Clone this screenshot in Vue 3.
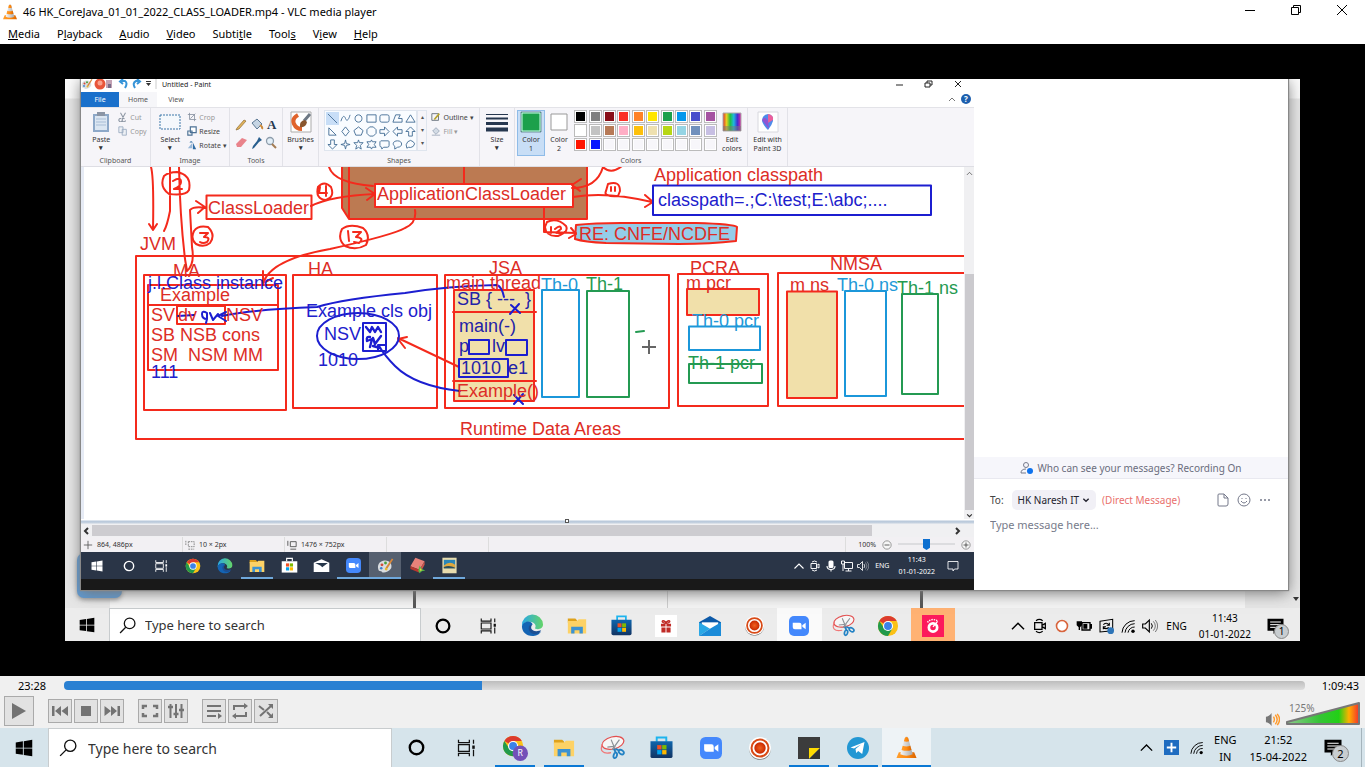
<script setup>
import { ref } from 'vue'

const menus = [
  ['', 'M', 'edia'], ['P', 'l', 'ayback'], ['', 'A', 'udio'], ['', 'V', 'ideo'],
  ['Subti', 't', 'le'], ['Tool', 's', ''], ['V', 'i', 'ew'], ['', 'H', 'elp']
]
const position = ref(337)
const volume = ref(125)
const zoomLevel = ref(50)
const message = ref('')
const query = ref('')
const innerQuery = ref('')

const palette = [
  '#000000', '#7f7f7f', '#880e17', '#fb3025', '#ff8227', '#ffe600', '#1ca04b', '#0397ec', '#464ccb', '#a553a1',
  '#ffffff', '#c3c3c3', '#b77a57', '#ffaec5', '#fdc00c', '#eee0b0', '#b7d716', '#95d4e4', '#7191bd', '#c7bfe3',
  '#ff1500', '#0614ff', '', '', '', '', '', '', '', ''
]
const shapes = [
  'M1 1L11 11', 'M1 9C3 2 5 3 6 6S9 9 11 2', 'M6 2C11 2 11 10 6 10S1 2 6 2Z', 'M1 2H11V10H1Z', 'M3 2H9Q11 2 11 4V8Q11 10 9 10H3Q1 10 1 8V4Q1 2 3 2Z', 'M1 10L4 2H9L7 6H11V10Z', 'M6 2L11 10H1Z',
  'M2 2L10 10H2Z', 'M6 1L10 6L6 11L2 6Z', 'M6 1L11 5L9 10H3L1 5Z', 'M4 1H8L11 4V8L8 11H4L1 8V4Z', 'M1 4H6V1L11 6L6 11V8H1Z', 'M11 4H6V1L1 6L6 11V8H11Z', 'M4 11V6H1L6 1L11 6H8V11Z',
  'M4 1V6H1L6 11L11 6H8V1Z', 'M6 1L7 5L11 6L7 7L6 11L5 7L1 6L5 5Z', 'M6 1L7 4H11L8 7L9 11L6 9L3 11L4 7L1 4H5Z', 'M6 1L7 3H11L9 6L11 9H7L6 11L5 9H1L3 6L1 3H5Z', 'M2 2H10Q11 2 11 3V7Q11 9 9 9H5L3 11V9Q1 9 1 7V3Z', 'M6 2C12 2 12 9 6 9L3 11V8C0 6 1 2 6 2Z', 'M3 3Q6 0 9 3Q12 5 9 8Q6 10 4 9L2 10Q0 6 3 3Z'
]
const innerApps = [
  ['win-w', 12], ['ring-w', 14], ['view-w', 14], ['chrome', 16], ['edge', 16], ['folder', 16], ['store-w', 17], ['mail-w', 17], ['zoom', 15], ['paint', 17], ['block', 17], ['photo', 17]
]
const sharedApps = [
  ['ring', 18], ['view', 18], ['edge', 23], ['folder', 20], ['store', 21], ['gift', 22], ['mail', 22], ['record', 21], ['zoom', 20], ['snip', 23], ['chrome', 22], ['pink', 22]
]
const apps = [
  ['ring', 19], ['view', 20], ['chromeR', 26], ['folder', 22], ['snip', 25], ['store', 23], ['zoom', 22], ['record', 24], ['notes', 24], ['telegram', 24], ['vlc', 23]
]
const running = ['chromeR', 'folder', 'notes', 'telegram', 'vlc']
const innerRunning = ['folder', 'zoom', 'paint', 'photo']
const controls = [
  [['Previous', 'prev'], ['Stop', 'stop'], ['Next', 'next']],
  [['Fullscreen', 'full'], ['Extended settings', 'eq']],
  [['Playlist', 'list'], ['Loop', 'loop'], ['Random', 'random']]
]
</script>

<template>
  <svg class="defs" width="0" height="0" aria-hidden="true">
    <defs>
      <linearGradient id="gOrange" x1="0" x2="1"><stop offset="0" stop-color="#ffa030" /><stop offset=".5" stop-color="#ff8a10" /><stop offset="1" stop-color="#d96400" /></linearGradient>
      <linearGradient id="gGray" x1="0" x2="1"><stop offset="0" stop-color="#f8f8f8" /><stop offset="1" stop-color="#a9a9a9" /></linearGradient>
      <linearGradient id="gEdge" x1="0" y1="0" x2="1" y2="0"><stop offset="0" stop-color="#2aa8e4" /><stop offset="1" stop-color="#64d468" /></linearGradient>
      <linearGradient id="gStore" x1="0" y1="0" x2="0" y2="1"><stop offset="0" stop-color="#0f66ad" /><stop offset="1" stop-color="#123463" /></linearGradient>
      <linearGradient id="gVol" x1="0" x2="1"><stop offset="0" stop-color="#8cc98c" /><stop offset=".45" stop-color="#36c436" /><stop offset=".72" stop-color="#22d016" /><stop offset=".86" stop-color="#ffb000" /><stop offset="1" stop-color="#f4302c" /></linearGradient>
      <linearGradient id="gRain" x1="0" x2="1"><stop offset="0" stop-color="#e03030" /><stop offset=".2" stop-color="#e8d020" /><stop offset=".4" stop-color="#20c040" /><stop offset=".6" stop-color="#20b8e0" /><stop offset=".8" stop-color="#4030d0" /><stop offset="1" stop-color="#e020a0" /></linearGradient>
      <radialGradient id="gRec"><stop offset="0" stop-color="#f06020" /><stop offset="1" stop-color="#c82800" /></radialGradient>
    </defs>
    <symbol id="win" viewBox="0 0 24 24"><path d="M1 4.5L10.5 3v8.5H1zM11.700 2.900L23 1v10.500H11.700zM1 12.600h9.500V21L1 19.700zM11.700 12.600H23V23l-11.300-1.800z" fill="currentColor" /></symbol>
    <symbol id="win-w" viewBox="0 0 24 24"><path d="M1 4.500L10.500 3v8.500H1zM11.700 2.900L23 1v10.500H11.700zM1 12.600h9.500V21L1 19.700zM11.700 12.600H23V23l-11.300-1.800z" fill="#fff" /></symbol>
    <symbol id="ring" viewBox="0 0 24 24"><circle cx="12" cy="12" r="8.500" fill="none" stroke="#000" stroke-width="3" /></symbol>
    <symbol id="ring-w" viewBox="0 0 24 24"><circle cx="12" cy="12" r="8" fill="none" stroke="#fff" stroke-width="2.400" /></symbol>
    <symbol id="view" viewBox="0 0 24 24"><path d="M3 2v3.500h13V2M3 22v-3.500h13V22M3 8h13v8H3zM21 2v5M21 14v8" fill="none" stroke="#111" stroke-width="1.500" /><path d="M19.500 9h3v4h-3z" fill="#111" /></symbol>
    <symbol id="view-w" viewBox="0 0 24 24"><path d="M3 2v4h13V2M3 22v-4h13v4M3 8h13v8H3zM21 2v5M21 14v8" fill="none" stroke="#fff" stroke-width="1.500" /><path d="M19.500 9h3v4h-3z" fill="#fff" /></symbol>
    <symbol id="chrome" viewBox="0 0 24 24"><circle cx="12" cy="12" r="11" fill="#fbc116" /><path d="M12 12L2.500 6.500A11 11 0 0 1 21.500 6.500H12z" fill="#dc3b2e" /><path d="M2.500 6.500A11 11 0 0 0 12 23l5-8.500-5 2.500-4.500-3z" fill="#229a4b" /><circle cx="12" cy="12" r="5.500" fill="#fff" /><circle cx="12" cy="12" r="4.300" fill="#3b82e8" /></symbol>
    <symbol id="chromeR" viewBox="0 0 27 27"><use href="#chrome" width="23" height="23" /><circle cx="19" cy="19" r="8" fill="#7351b8" /><text x="19" y="22" text-anchor="middle" font-size="9" fill="#fff" font-family="Noto Sans, sans-serif">R</text></symbol>
    <symbol id="edge" viewBox="0 0 24 24"><path d="M1 12A11 11 0 0 1 23 11c0 4-4 5.500-7.500 4.500-1-.4-1-1-.4-1.800C16 11 13 8 9 8c-4 0-7 2-8 6z" fill="url(#gEdge)" /><path d="M1 13C2 9 6 7.500 9 8c2 .5 3 2 3 3-5 1-4 9 4 9 2 0 4-1 5-2-2 4-6 5-9 5C5 23 1 18 1 13z" fill="#1464b4" /><path d="M8 15c0-3 2-4 4-4-3 3-1 7 4 7 2 0 4-1 5-1-2 4-5 4-6 4-4 0-7-3-7-6z" fill="#1b4f94" /></symbol>
    <symbol id="folder" viewBox="0 0 24 24"><path d="M1 3h9l2 2v3H1z" fill="#dfa21c" /><path d="M1 6h11l2-2h9v17H1z" fill="#fdd266" /><path d="M5 13h14v8h-4v-4H9v4H5z" fill="#3c92d2" /></symbol>
    <symbol id="store" viewBox="0 0 24 24"><path d="M7 6V1.500h10V6" fill="none" stroke="#1db4ee" stroke-width="2" /><path d="M.500 5.500h23V21q0 2-2 2h-19q-2 0-2-2z" fill="url(#gStore)" /><path d="M7.500 9.500H12V14H7.500z" fill="#f25022" /><path d="M12.700 9.500h4.500V14h-4.500z" fill="#7fba00" /><path d="M7.500 14.700H12v4.500H7.500z" fill="#00a4ef" /><path d="M12.700 14.700h4.500v4.500h-4.500z" fill="#ffb900" /></symbol>
    <symbol id="store-w" viewBox="0 0 24 24"><path d="M8 6V2h8v4" fill="none" stroke="#fff" stroke-width="1.600" /><path d="M1 6h22v16H1z" fill="#fff" /><path d="M7 9h4.500v4.500H7z" fill="#f25022" /><path d="M12.500 9H17v4.500h-4.500z" fill="#7fba00" /><path d="M7 14.500h4.500V19H7z" fill="#00a4ef" /><path d="M12.500 14.500H17V19h-4.500z" fill="#ffb900" /></symbol>
    <symbol id="mail" viewBox="0 0 24 24"><path d="M0 8l12-7 12 7v4H0z" fill="#0c59a8" /><path d="M3 8h18v8H3z" fill="#fff" /><path d="M0 8l12 7-12 8z" fill="#2aa8e6" /><path d="M24 8v15H0l12-8z" fill="#1b8bd8" /></symbol>
    <symbol id="mail-w" viewBox="0 0 24 24"><path d="M1 8l11-5 11 5v13H1z" fill="#fff" /><path d="M3 8.500l18 0-8 6-2-2z" fill="#26364a" /></symbol>
    <symbol id="zoom" viewBox="0 0 24 24"><rect width="24" height="24" rx="6" fill="#4488fc" /><path d="M4.500 8h8q2.500 0 2.500 2.500V16H7q-2.500 0-2.500-2.500zM16 11l4-3v8l-4-3z" fill="#fff" /></symbol>
    <symbol id="snip" viewBox="0 0 27 27"><g fill="none" stroke="#e25050" stroke-width="1.300"><ellipse cx="14" cy="8.500" rx="12" ry="6.500" transform="rotate(-14 14 8.500)" fill="#f6f6f6" /><path d="M3 9C-1 17 3 21 12 19" stroke="#f07878" /></g><path d="M12 5l5 12M21 5l-8 11M8 13l9-1" stroke="#8a9096" stroke-width="1.300" fill="none" /><g fill="none" stroke="#2382c4" stroke-width="2"><ellipse cx="16.500" cy="22" rx="1.800" ry="3" transform="rotate(15 16.500 22)" /><ellipse cx="23" cy="18.500" rx="3" ry="2" transform="rotate(35 23 18.500)" /><path d="M15 15l2 4M17 15l4 2" /></g></symbol>
    <symbol id="record" viewBox="0 0 24 24"><circle cx="12" cy="13" r="10.800" fill="#777" /><circle cx="12" cy="12" r="11" fill="#fff" /><circle cx="12" cy="12" r="8.500" fill="none" stroke="#d84a16" stroke-width="2" /><circle cx="12" cy="12" r="5.700" fill="url(#gRec)" /></symbol>
    <symbol id="gift" viewBox="0 0 24 24"><path d="M0 0h24v24H0z" fill="#fff" /><path d="M6.500 9.500h5v3h-5zM12.500 9.500h5v3h-5zM7 13.500h4.500V19H7zM12.500 13.500H17V19h-4.500z" fill="#c02a26" /><path d="M12 9C6 9 7 3.500 12 8 17 3.500 18 9 12 9z" fill="none" stroke="#c02a26" stroke-width="1.500" /></symbol>
    <symbol id="pink" viewBox="0 0 24 24"><path d="M0 0h24v24H0z" fill="#fc1a5c" /><circle cx="12" cy="13.500" r="4.500" fill="none" stroke="#fff" stroke-width="3" /><path d="M12 13l5-6" stroke="#fff" stroke-width="1.500" /><path d="M6 8a8 8 0 0 1 11-1.500" fill="none" stroke="#fff" stroke-width="1.500" stroke-dasharray="1.500 1" /></symbol>
    <symbol id="notes" viewBox="0 0 24 24"><path d="M1 1h22v11L12 23H1z" fill="#3c3c3c" /><path d="M12 12h11L12 23z" fill="#ffdb00" /><path d="M23 12v11H12z" fill="#333" /></symbol>
    <symbol id="telegram" viewBox="0 0 24 24"><circle cx="12" cy="12" r="11" fill="#2397d3" /><path d="M4.500 11.500L18.500 6l-2.300 12-4-3-2 2-.7-4 5.500-4.500-7 4z" fill="#fff" /></symbol>
    <symbol id="vlc" viewBox="0 0 24 24"><path d="M4 17h16l2.500 6h-21z" fill="url(#gOrange)" /><path d="M10.500 1q1.500-1 3 0L18.500 19q-6.500 3-13 0z" fill="url(#gGray)" /><path d="M10.300 2q1.700-2 3.400 0l1 3.500q-2.700 1-5.400 0zM8 10.200q4 1.500 8 0l1.200 4.300q-5 2-10.400 0z" fill="url(#gOrange)" /></symbol>
    <symbol id="paint" viewBox="0 0 24 24"><path d="M10 5C3 6 0 12 2 18c1 3 4 1 5 3 1 2 9 1 13-5 2-6-2-12-10-11z" fill="#d9dde0" /><circle cx="7" cy="11" r="2" fill="#d24a3a" /><circle cx="12" cy="8.500" r="2" fill="#48a03c" /><circle cx="6" cy="16" r="1.800" fill="#3c7fd0" /><circle cx="13" cy="17" r="2" fill="#e8b82c" /><path d="M12 15L21 2l2 1-8 13z" fill="#d8873a" /></symbol>
    <symbol id="block" viewBox="0 0 24 24"><path d="M9 1l13 5-7 12L2 13z" fill="#e8827a" /><path d="M2 13l13 5-1 4L2 17z" fill="#b8382f" /><path d="M15 18l7-12v5l-5 9z" fill="#d0544a" /><path d="M15 12l3 5 5 2-5 1-3 3-2-4z" fill="#58b848" /><path d="M16 16l2 2-1 2-2-2z" fill="#f2d13c" /></symbol>
    <symbol id="photo" viewBox="0 0 24 24"><path d="M2 1h20v22H2z" fill="#e8dcae" /><path d="M4 4h16v12H4z" fill="#2a86b8" /><path d="M4 12q8-7 16-1v5H4z" fill="#e0a83c" /><path d="M4 14q8-3 16 1v1H4z" fill="#274e60" /></symbol>
    <symbol id="search" viewBox="0 0 24 24"><g fill="none" stroke="currentColor" stroke-width="1.800"><circle cx="15" cy="9" r="7.500" /><path d="M9.500 14.500L1.500 22.500" /></g></symbol>
    <symbol id="up" viewBox="0 0 24 24"><path d="M3 17l9-9 9 9" fill="none" stroke="currentColor" stroke-width="2.200" /></symbol>
    <symbol id="down" viewBox="0 0 24 24"><path d="M4 8l8 8 8-8" fill="none" stroke="currentColor" stroke-width="4" /></symbol>
    <symbol id="wifi" viewBox="0 0 24 24"><g fill="none" stroke="currentColor" stroke-width="1.500"><path d="M3 22A19 19 0 0 1 22 4" /><path d="M7.500 22A15 15 0 0 1 22 8.500" /><path d="M12 22a10 10 0 0 1 10-8.500" /></g><circle cx="19.500" cy="20" r="2.600" fill="currentColor" /></symbol>
    <symbol id="speaker" viewBox="0 0 24 24"><path d="M1 9h4l6-6v18l-6-6H1z" fill="none" stroke="currentColor" stroke-width="1.700" /><path d="M14 8q3 4 0 8" fill="none" stroke="currentColor" stroke-width="1.500" /><path d="M17 5q6 7 0 14M20 3q7 9 0 18" fill="none" stroke="currentColor" stroke-width="1.500" opacity=".5" /></symbol>
    <symbol id="meet" viewBox="0 0 24 24"><path d="M4 7h11v10H4zM15 11l5-3v8l-5-3M6 4q5-4 10 0M6 20q5 4 10 0" fill="none" stroke="currentColor" stroke-width="1.900" /></symbol>
    <symbol id="mic" viewBox="0 0 24 24"><rect x="7" y="1" width="10" height="15" rx="3" fill="currentColor" /><path d="M4 12q0 7 8 7t8-7M12 18v5" stroke="currentColor" stroke-width="2.200" fill="none" /></symbol>
    <symbol id="net" viewBox="0 0 24 24"><path d="M7 5h16v12H7zM15 17v5M9 22h12M1 2h6v6H1zM4 8v14" fill="none" stroke="currentColor" stroke-width="1.900" /></symbol>
    <symbol id="battery" viewBox="0 0 24 24"><path d="M9 7h12v11H9zM21 10h2v5h-2" fill="none" stroke="currentColor" stroke-width="2" /><path d="M11 9h6v7h-6zM1 5h8v6l-3 3v4H4v-4l-3-3z" fill="currentColor" /></symbol>
    <symbol id="sync" viewBox="0 0 24 24"><path d="M3 5l19-3v17l-19 2z M8 10q5-4 8 0M17 7v4h-4M8 17v-4h4M8 14q4 4 8 0" fill="none" stroke="currentColor" stroke-width="1.600" /><circle cx="19" cy="19" r="5" fill="#2e75b8" /></symbol>
    <symbol id="bubble" viewBox="0 0 24 24"><path d="M2 3h20v15h-7l-3 4v-4H2z" fill="none" stroke="currentColor" stroke-width="1.700" /></symbol>
    <symbol id="note" viewBox="0 0 24 24"><path d="M0 1h24v18H13l-4 5v-5H0z" fill="#000" /><path d="M4 6h16M4 10h16M4 14h16" stroke="#fff" stroke-width="1.500" /></symbol>

    <symbol id="play" viewBox="0 0 24 24"><path d="M5 4L19 12L5 20z" fill="#737373" /></symbol>
    <symbol id="prev" viewBox="0 0 18 18"><path d="M1 4h2.500v10H1zM10 4v10L4 9zM17 4v10l-6.500-5z" fill="#737373" /></symbol>
    <symbol id="next" viewBox="0 0 18 18"><path d="M14.500 4H17v10h-2.500zM8 4l6 5-6 5zM1.500 4L8 9l-6.500 5z" fill="#737373" /></symbol>
    <symbol id="stop" viewBox="0 0 18 18"><path d="M4 4h10v10H4z" fill="#737373" /></symbol>
    <symbol id="full" viewBox="0 0 18 18"><path d="M6 4H2v3M12 4h4v3M2 11v3h4M16 11v3h-4" fill="none" stroke="#737373" stroke-width="2.500" /></symbol>
    <symbol id="eq" viewBox="0 0 18 18"><path d="M3.500 2v14M9 2v14M14.500 2v14" stroke="#737373" stroke-width="2" /><path d="M1 5h5M6.500 12h5M12 8h5" stroke="#737373" stroke-width="2.600" /></symbol>
    <symbol id="list" viewBox="0 0 18 18"><path d="M2 4h14M2 9h14M2 14h9" stroke="#737373" stroke-width="2" /><path d="M13 11l4 3-4 3z" fill="#737373" /></symbol>
    <symbol id="loop" viewBox="0 0 18 18"><path d="M3 8V4h11M15 10v4H4" fill="none" stroke="#737373" stroke-width="2" /><path d="M13 1l4 3-4 3zM5 11l-4 3 4 3z" fill="#737373" /></symbol>
    <symbol id="random" viewBox="0 0 18 18"><path d="M2 4l5 4M10 10l4 4M3 14L14 4" fill="none" stroke="#737373" stroke-width="2" /><path d="M11 2h5v5zM11 16h5v-5z" fill="#737373" /></symbol>
  </svg>

  <div class="player">
    <header class="title">
      <svg class="i16"><use href="#vlc" /></svg>
      <h1>46 HK_CoreJava_01_01_2022_CLASS_LOADER.mp4 - VLC media player</h1>
      <div class="wincontrols">
        <button aria-label="Minimize"><svg viewBox="0 0 12 12"><path d="M1 6.500h10" /></svg></button>
        <button aria-label="Restore"><svg viewBox="0 0 12 12"><path d="M1.500 3.500h7v7h-7zM3.500 3.500v-2h7v7h-2" /></svg></button>
        <button aria-label="Close"><svg viewBox="0 0 12 12"><path d="M1 1l10 10M11 1L1 11" /></svg></button>
      </div>
    </header>
    <nav class="menu">
      <button v-for="m in menus" :key="m.join('')">{{ m[0] }}<u>{{ m[1] }}</u>{{ m[2] }}</button>
    </nav>

    <main class="video">
      <div class="frame">
        <div class="desktop">
          <div class="dock"></div>
          <section class="meeting">
            <div class="share">
              <div class="ptitle">
                <svg class="quick" viewBox="0 0 76 12">
                  <use href="#paint" x="0" y="0" width="12" height="12" /><circle cx="19" cy="6" r="5.500" fill="#e8553a" /><circle cx="19" cy="5" r="2.500" fill="#f9a08c" /><path d="M25 2h6v8h-6z" fill="#c3a2b4" /><path d="M27 6h3v4h-3z" fill="#776c88" />
                  <path d="M39 3h5q3 2 0 7M42 1l-3 2.500L42 6M59 3h-4q-4 2-1 7M56 1l3 2.500L56 6" fill="none" stroke="#3794d8" stroke-width="2" /><path d="M65 5h5l-2.500 3zM65 3h5v1h-5z" fill="#333" /><path d="M75 1v10" stroke="#ccc" />
                </svg>
                <span>Untitled - Paint</span>
                <svg class="pwin" viewBox="0 0 68 10"><path d="M1 6h7M30 4h5v4h-5zM32 4V2h5v4h-2M60 2l6 6M66 2l-6 6" fill="none" stroke="#222" /></svg>
              </div>
              <div class="ptabs">
                <button class="file">File</button><button class="home">Home</button><button>View</button>
                <svg class="help" viewBox="0 0 24 12"><path d="M1 8l3-3 3 3" fill="none" stroke="#777" /><circle cx="18" cy="6" r="5" fill="#1d5fae" /><text x="18" y="9" font-size="8" font-weight="700" fill="#fff" text-anchor="middle">?</text></svg>
              </div>
              <div class="ribbon">
                <div class="group clip">
                  <div class="tools">
                    <button class="big"><svg viewBox="0 0 20 22"><path d="M2 3h16v18H2z" fill="#8da8c8" /><path d="M4 5h12v14H4z" fill="#dbe6f2" /><path d="M6 1h8v4H6z" fill="#8b95a5" /><path d="M5 8h10M5 11h10M5 14h10" stroke="#a8bdd6" /></svg>Paste<b>▾</b></button>
                    <div class="stack dim">
                      <button><svg viewBox="0 0 12 12"><path d="M3 1l4 7M9 1L5 8M5 10a2 2 0 1 1-1-2M9 10a2 2 0 1 1-1-2" fill="none" stroke="#9099a6" stroke-width="1.300" /></svg>Cut</button>
                      <button><svg viewBox="0 0 12 12"><path d="M1 1h5v7H1zM5 4h5v7H5z" fill="#edf0f5" stroke="#98a8bf" /></svg>Copy</button>
                    </div>
                  </div><span>Clipboard</span>
                </div>
                <div class="group image">
                  <div class="tools">
                    <button class="big"><svg viewBox="0 0 22 22"><path d="M1 4h20v14H1z" fill="#f4f8fc" stroke="#3b77a8" stroke-dasharray="2 1" /></svg>Select<b>▾</b></button>
                    <div class="stack">
                      <button class="dim"><svg viewBox="0 0 12 12"><path d="M3 1v8h8M1 3h8v8M4 8l6-6" fill="none" stroke="#8993a2" /></svg>Crop</button>
                      <button><svg viewBox="0 0 12 12"><path d="M4 1h7v7H4zM1 6h5v5H1z" fill="#fff" stroke="#4b7094" stroke-width="1.400" /></svg>Resize</button>
                      <button><svg viewBox="0 0 12 12"><path d="M1 10L6 4v6z" fill="#98b8d8" /><path d="M7 3l4 8H7zM3 3q2-3 4 0" fill="#316ea4" /></svg>Rotate ▾</button>
                    </div>
                  </div><span>Image</span>
                </div>
                <div class="group toolset">
                  <div class="tools">
                    <svg viewBox="0 0 44 36">
                      <path d="M3 12L10 4l2 1-7 8-3 1z" fill="#e2b35a" stroke="#8c6b36" stroke-width=".700" /><path d="M18 7l5-4 5 5-5 5z" fill="#c6d5e4" stroke="#5d7893" /><path d="M26 9q3 2 2 4" stroke="#cd8b3c" stroke-width="2" fill="none" /><text x="33" y="13" font-family="Liberation Serif, serif" font-weight="700" font-size="13" fill="#25384f">A</text>
                      <path d="M2 28l6-6 5 2-6 7H3z" fill="#e9838b" /><path d="M25 21l3 3-3 2-5 6-2 1 1-3 4-5z" fill="#285e8e" /><circle cx="36" cy="25" r="3.500" fill="#e3eff8" stroke="#8d9cab" stroke-width="1.300" /><path d="M38 28l4 4" stroke="#a47c54" stroke-width="2" />
                    </svg>
                  </div><span>Tools</span>
                </div>
                <div class="group brushes">
                  <div class="tools"><button class="big"><svg viewBox="0 0 22 22"><path d="M1 1h20v20H1z" fill="#fff" stroke="#ababab" /><path d="M8 4C-1 9 5 18 12 18" fill="none" stroke="#e0632c" stroke-width="4" /><path d="M20 3L14 10" stroke="#6d7884" stroke-width="3" /><path d="M15 9q-6 1-5 7 6 1 7-5z" fill="#8a562e" /></svg>Brushes<b>▾</b></button></div><span></span>
                </div>
                <div class="group shapes">
                  <div class="tools">
                    <div class="gallery"><svg v-for="(d, n) in shapes" :key="n" viewBox="0 0 12 12" :class="{ picked: n === 0 }"><path :d="d" /></svg></div>
                    <div class="arrows"><i>▴</i><i>▾</i><i>▾</i></div>
                    <div class="stack">
                      <button><svg viewBox="0 0 12 12"><path d="M1 2h8v8H1z" fill="none" stroke="#5a6570" /><path d="M4 9l6-7" stroke="#b6a22c" stroke-width="2" /></svg>Outline ▾</button>
                      <button class="dim"><svg viewBox="0 0 12 12"><path d="M2 6l4-4 4 4-4 4z" fill="#d3dbe5" stroke="#96a3b4" /><path d="M1 11h10" stroke="#96a3b4" /></svg>Fill ▾</button>
                    </div>
                  </div><span>Shapes</span>
                </div>
                <div class="group size">
                  <div class="tools"><button class="big"><svg viewBox="0 0 22 22"><path d="M0 3.500h22" stroke="#26374f" /><path d="M0 7.500h22" stroke="#26374f" stroke-width="2" /><path d="M0 12.500h22" stroke="#26374f" stroke-width="3" /><path d="M0 18.500h22" stroke="#26374f" stroke-width="4" /></svg>Size<b>▾</b></button></div><span></span>
                </div>
                <div class="group colors">
                  <div class="tools">
                    <button class="big active"><svg viewBox="0 0 22 22"><path d="M1 1h20v20H1z" fill="#1ca04b" stroke="#708b9d" /><path d="M2 2h18v18H2z" fill="none" stroke="#cfe" /></svg>Color<br>1</button>
                    <button class="big"><svg viewBox="0 0 22 22"><path d="M3 3h16v16H3z" fill="#fff" stroke="#999" /></svg>Color<br>2</button>
                    <div class="palette"><button v-for="(c, n) in palette" :key="n" :aria-label="'Colour ' + (n + 1)"><i :style="{ background: c || '#f7f6fa' }"></i></button></div>
                    <button class="big edit"><svg viewBox="0 0 22 22"><path d="M2 2h18v18H2z" fill="url(#gRain)" stroke="#aaa" /><path d="M2 15h18v5H2z" fill="#777" opacity=".500" /></svg>Edit<br>colors</button>
                  </div><span>Colors</span>
                </div>
                <div class="group three">
                  <div class="tools"><button class="big"><svg viewBox="0 0 22 22"><path d="M1 1h20v20H1z" fill="#fff" stroke="#d8d8de" /><path d="M11 3q6 1 5 7-1 4-5 9-5-5-6-9 0-6 6-7z" fill="#4e8bea" /><path d="M11 3q6 1 5 6l-5 3z" fill="#ea5f9c" /><path d="M5 9q3-5 6 1l1 8z" fill="#8f55d4" /></svg>Edit with<br>Paint 3D</button></div><span></span>
                </div>
              </div>

              <div class="work">
                <svg class="drawing" viewBox="81 167 883 352" preserveAspectRatio="xMinYMin meet" font-size="18">
                  <path d="M342 160H587V218.500H349L342 208Z" fill="#bc7a52" />
                  <g fill="#f1e0aa"><path d="M454 290h80v111h-80zM687 289h72v26h-72zM787 292h50v106h-50z" /></g>
                  <path d="M375 184h198v23H375z" fill="#fff" />
                  <g class="red">
                    <path d="M136 256H975V439H136zM206.500 195.500h105V219h-105zM342 160V208l7 11H587V160M349 160V219M375 184h198v23H375zM464 160v24" />
                    <path d="M144 275h142V410H144zM148 285h130v85H148zM148 305h130M177 306h48v18h-48zM293 275h144V408H293zM445 275h224V408H445zM454 290h80v111h-80zM453 312h83M453 381h83M678 274h90V406h-90zM687 289h72v26h-72zM975 273H778V406H975M787 291.500h50v106.500h-50z" />
                    <path class="pill" d="M576 225q18-2 45-2l75 0q38 1 41 4l-1 14q-25 3-57 3l-73-1q-22-1-31-4z" />
                    <path d="M151 167q3 10 2 63M149 224l4 6 4-6M170 167v44q-3 15-6 20M179 167q1 50 6 92l2 12M187 271q8-7 5-24l-2-37q4-4 16-2M196 201l9 6-7 6M164 176q5-4 13-4 15 3 12 18-3 6-20 4-10-7-5-18M173 181q8-5 8 1 0 4-7 7h8" />
                    <path d="M194 231q4-6 14-4 8 8 2 16-6 5-14 1-6-5-2-13M200 233h8l-4 4q7 0 3 5-4 2-7 0M311 206q20-10 64-12M366 188l9 6-8 6M318 187q6-7 13 0 4 10-5 13-11-1-8-13M320 187l-1 6h8M326 186v10M329 167q5 16 44 19" />
                    <path d="M415 210q2 13-10 18-12 7-75 21-57 10-66 32M263 271v12l10-5M342 229q8-6 21-1 8 7 3 17-10 6-21 1-8-7-3-17M348 231l1 10M353 232h8l-5 5q9 1 3 6l-5-1" />
                    <path d="M572 188q25 0 31-21M581 179l-9 6 8 6M573 197q34-6 79 5M645 195l8 7-8 5M608 184q12-4 12 7l-2 5q-15 1-12-5zM611 187v4M615 187v4M603 167q8 8 19-1M544 208v24l32 1M571 228l5 6-7 4M547 222q10-5 19 4 3 6-8 10-12 1-13-9zM551 227v6M555 229q6-5 6 0l-5 4h7" />
                    <path d="M398 338l61 29M407 337l-9 2 7 9" />
                  </g>
                  <g class="blue">
                    <path d="M653 185.500h278V215H653zM469 340h20v14h-20zM506 340h21v15h-21zM459 359h49v18h-49zM363 323h23v28h-23z" />
                    <ellipse cx="358" cy="336" rx="41" ry="23" />
                    <path d="M504 297q-2-10-7-12-50 1-92 8-62 6-88 14-60 2-95 9M226 312l-8 4 8 5M178 316l16-1M202 314q0-4 5-1v6q-5 0-5-5M207 319l-1 4M210 313l3 7 5-6M460 391q-45-5-65-25-10-10-16-20M378 351v-6h8M511 305l9 8M519 304l-9 10M514 395l9 9M523 394l-9 10" />
                    <path d="M366 327l4 5 2-5 3 5 3-5 3 5M370 337q-4-1-3 4l5-2-2 8M373 338l2 6 6-8M373 346l7 2" stroke-width="2.400" />
                  </g>
                  <g class="sky"><path d="M542 290h37v107h-37zM689 326.500h71V350h-71zM845 291h41v105h-41z" /></g>
                  <g class="green"><path d="M587 291h42v106h-42zM689 364h73v19h-73zM902 294h36v100h-36zM636 332l8-1" /></g>
                  <path d="M649 340v14M642 347h14" stroke="#666" stroke-width="2" />
                  <g class="tr">
                    <text x="140" y="250">JVM</text><text x="208" y="214">ClassLoader</text><text x="377" y="200">ApplicationClassLoader</text><text x="654" y="181">Application classpath</text><text x="579" y="240">RE: CNFE/NCDFE</text>
                    <text x="173" y="277">MA</text><text x="160" y="301">Example</text><text x="151" y="321">SV</text><text x="178" y="321">dv</text><text x="226" y="321">NSV</text><text x="151" y="341">SB NSB cons</text><text x="151" y="361">SM&#160; NSM MM</text>
                    <text x="308" y="275">HA</text><text x="489" y="274">JSA</text><text x="446" y="289">main thread</text><text x="457" y="397">Example()</text><text x="690" y="274">PCRA</text><text x="686" y="289">m pcr</text><text x="830" y="270">NMSA</text><text x="790" y="291">m ns</text><text x="460" y="435">Runtime Data Areas</text>
                  </g>
                  <g class="tb"><text x="148" y="289">j.l.Class instance</text><text x="151" y="378">111</text><text x="306" y="317">Example cls obj</text><text x="324" y="340">NSV</text><text x="318" y="366">1010</text><text x="658" y="206">classpath=.;C:\test;E:\abc;....</text></g>
                  <g class="tn"><text x="457" y="305">SB { ---&#160; }</text><text x="459" y="332">main(-)</text><text x="459" y="352">p</text><text x="492" y="352">lv</text><text x="461" y="374">1010</text><text x="508" y="374">e1</text></g>
                  <g class="ts"><text x="541" y="291">Th-0</text><text x="692" y="327">Th-0 pcr</text><text x="837" y="291">Th-0 ns</text></g>
                  <g class="tg"><text x="586" y="290">Th-1</text><text x="688" y="369">Th-1 pcr</text><text x="897" y="294">Th-1 ns</text></g>
                </svg>
                <div class="vscroll"><svg><use href="#up" /></svg><i></i><svg><use href="#down" /></svg></div>
              </div>
              <div class="edgeline"><i></i></div>
              <div class="hscroll"><svg viewBox="0 0 10 10"><path d="M6 2L3 5l3 3" /></svg><i></i><svg viewBox="0 0 10 10"><path d="M4 2l3 3-3 3" /></svg></div>
              <div class="pstatus">
                <span class="c1"><svg viewBox="0 0 12 12"><path d="M6 1v10M1 6h10" stroke="#555" /></svg>864, 486px</span>
                <span class="c1"><svg viewBox="0 0 12 12"><path d="M4 2h7v6H4zM1 1v6M4 11h7" fill="none" stroke="#777" stroke-dasharray="2 1" /></svg>10 × 2px</span>
                <span class="c2"><svg viewBox="0 0 12 12"><path d="M4 2h7v6H4zM1 1v6M4 11h7" fill="none" stroke="#444" /></svg>1476 × 752px</span>
                <span class="c2"></span><span class="c3"></span>
                <label class="zoomer">100%<svg viewBox="0 0 12 12"><circle cx="6" cy="6" r="5" fill="#f6f6f6" stroke="#888" /><path d="M3 6h6" stroke="#444" /></svg><input v-model="zoomLevel" type="range" aria-label="Zoom"><svg viewBox="0 0 12 12"><circle cx="6" cy="6" r="5" fill="#f6f6f6" stroke="#888" /><path d="M3 6h6M6 3v6" stroke="#444" /></svg></label>
              </div>
              <div class="innerbar">
                <button v-for="a in innerApps" :key="a[0]" :aria-label="a[0]" :class="{ run: innerRunning.includes(a[0]), front: a[0] === 'paint' }"><svg :width="a[1]" :height="a[1]"><use :href="'#' + a[0]" /></svg></button>
                <div class="itray">
                  <svg><use href="#up" /></svg><svg><use href="#meet" /></svg><svg><use href="#mic" /></svg><svg><use href="#net" /></svg><svg><use href="#speaker" /></svg>
                  <span>ENG</span><time>11:43<br>01-01-2022</time><svg class="bub"><use href="#bubble" /></svg>
                </div>
              </div>
              <div class="bezel"></div>
            </div>

            <aside class="chat">
              <div class="log"></div>
              <div class="notice"><svg viewBox="0 0 14 14"><circle cx="6" cy="4" r="2.500" fill="none" stroke="#777b8c" /><path d="M6 12H1q0-4 5-4" fill="none" stroke="#777b8c" /><circle cx="10" cy="10" r="3" fill="#0e72ed" /></svg>Who can see your messages? Recording On</div>
              <div class="to">
                <span>To:</span>
                <button class="who">HK Naresh IT <svg><use href="#down" /></svg></button>
                <em>(Direct Message)</em>
                <svg class="ops" viewBox="0 0 54 14"><g fill="none" stroke="#74788a"><path d="M3 1h5l4 4v6q0 2-2 2H3q-1 0-1-1V2q0-1 1-1zM8 1v4h4" /><circle cx="28" cy="7" r="6" /><path d="M25 8q3 4 6 0M26 5v1M30 5v1" /></g><g fill="#74788a"><circle cx="45" cy="7" r="1" /><circle cx="49" cy="7" r="1" /><circle cx="53" cy="7" r="1" /></g></svg>
              </div>
              <textarea v-model="message" aria-label="Message" placeholder="Type message here..."></textarea>
            </aside>
          </section>
          <div class="below"><i class="post"></i><i class="thin"></i><i class="post"></i><svg viewBox="0 0 8 8"><path d="M1 2h6L4 6z" fill="#333" /></svg></div>
        </div>

        <div class="bar shared">
          <button class="start" aria-label="Start"><svg><use href="#win" /></svg></button>
          <label class="find"><svg><use href="#search" /></svg><input v-model="innerQuery" aria-label="Search shared desktop" placeholder="Type here to search"></label>
          <div class="apps"><button v-for="a in sharedApps" :key="a[0]" :aria-label="a[0]" :class="a[0]"><svg :width="a[1]" :height="a[1]"><use :href="'#' + a[0]" /></svg></button></div>
          <div class="tray">
            <svg><use href="#up" /></svg><svg><use href="#meet" /></svg><svg viewBox="0 0 16 16"><circle cx="8" cy="8" r="5.500" fill="#fff" stroke="#d8643c" stroke-width="1.600" /></svg><svg><use href="#battery" /></svg><svg><use href="#sync" /></svg><svg><use href="#wifi" /></svg><svg><use href="#speaker" /></svg>
            <span>ENG</span><time>11:43<br>01-01-2022</time><div class="notif"><svg><use href="#note" /></svg><b>1</b></div>
          </div>
        </div>
      </div>
    </main>

    <section class="controls">
      <div class="seek"><time>23:28</time><input v-model="position" type="range" min="0" max="1000" aria-label="Position" :style="{ '--p': position / 10 + '%' }"><time>1:09:43</time></div>
      <div class="buttons">
        <button class="playbtn" aria-label="Play"><svg><use href="#play" /></svg></button>
        <div v-for="(g, n) in controls" :key="n" class="set"><button v-for="b in g" :key="b[0]" :aria-label="b[0]"><svg><use :href="'#' + b[1]" /></svg></button></div>
        <svg class="loud" viewBox="0 0 16 16"><path d="M1 5q3 0 6-4v14q-3-4-6-4z" fill="#777" /><path d="M9 5q2 3 0 6M11 3q4 5 0 10M13 2q5 6 0 12" fill="none" stroke="#ff9a2a" stroke-width="1.500" /></svg>
        <label class="volume"><svg viewBox="0 0 76 26"><path d="M2 24V22L74 3V24Z" fill="url(#gVol)" stroke="#777" stroke-width="2" stroke-linejoin="round" /></svg><span>125%</span><input v-model="volume" type="range" max="125" aria-label="Volume"></label>
      </div>
    </section>

    <footer class="bar host">
      <button class="start" aria-label="Start"><svg><use href="#win" /></svg></button>
      <label class="find"><svg><use href="#search" /></svg><input v-model="query" aria-label="Search" placeholder="Type here to search"></label>
      <div class="apps"><button v-for="a in apps" :key="a[0]" :aria-label="a[0]" :class="{ run: running.includes(a[0]), front: a[0] === 'vlc' }"><svg :width="a[1]" :height="a[1]"><use :href="'#' + a[0]" /></svg></button></div>
      <div class="tray">
        <svg><use href="#up" /></svg><svg class="plus" viewBox="0 0 16 16"><path d="M0 0h16v16H0z" fill="#1f6cc0" /><path d="M8 3v10M3 8h10" stroke="#fff" stroke-width="2" /></svg><svg><use href="#wifi" /></svg>
        <span>ENG<br>IN</span><time>21:52<br>15-04-2022</time><div class="notif"><svg><use href="#note" /></svg><b>2</b></div><i class="peek"></i>
      </div>
    </footer>
  </div>
</template>

<style>
html, body { margin: 0; background: #000; }
</style>

<style scoped>
* { box-sizing: border-box; }
.defs { position: absolute; }
button, input, textarea { font: inherit; color: inherit; background: none; border: 0; padding: 0; margin: 0; outline: 0; border-radius: 0; }
button { display: flex; align-items: center; justify-content: center; white-space: nowrap; }
svg { display: block; flex: none; }
.player { height: 100vh; min-height: 600px; display: flex; flex-direction: column; overflow: hidden; font-family: "Noto Sans", "Open Sans", sans-serif; font-size: 11px; color: #000; background: #fff; }
.title { display: flex; align-items: center; height: 23px; padding-left: 2px; }
.i16 { width: 16px; height: 16px; }
.title h1 { margin: 0 0 0 5px; font-size: 11px; line-height: 16px; font-weight: 400; flex: 1; white-space: nowrap; }
.wincontrols { display: flex; height: 20px; align-self: flex-start; }
.wincontrols button { width: 46px; }
.wincontrols svg { width: 12px; height: 12px; fill: none; stroke: #000; }
.menu { display: flex; height: 21px; padding-left: 8px; gap: 17px; }
.menu u { text-underline-offset: 1px; }

.video { flex: 1; min-height: 0; background: #000; padding: 35px 65px; }
.frame { height: 100%; display: flex; flex-direction: column; background: #e9e9e9; overflow: hidden; }
.desktop { position: relative; flex: 1; min-height: 0; display: flex; flex-direction: column; background: linear-gradient(#fbfbfb 19px, #e6e6e6 20px); }
.dock { position: absolute; left: 12px; bottom: 10px; width: 45px; height: 45px; border-radius: 7px; background: #5c9ad5; box-shadow: 0 2px 4px #999; }
.meeting { position: relative; flex: 1; min-height: 0; display: flex; margin: 0 12px 0 16px; background: #fff; box-shadow: 0 0 1px 1px #888, 0 3px 14px #777; }
.below { display: flex; height: 18px; align-items: stretch; justify-content: space-between; margin-left: 45px; padding-left: 303px; background: linear-gradient(90deg, #f4f4f4 1135px, #e6e6e6 1135px); }
.below .post { width: 3px; background: #555; }
.below .thin { width: 1px; background: #ccc; }
.below svg { width: 8px; height: 8px; align-self: center; }
.below .post + svg { margin-left: 118px; }
.share { flex: 1; min-width: 0; display: flex; flex-direction: column; background: #fff; font-size: 7px; line-height: 9px; color: #333; }
.ptitle { display: flex; align-items: center; height: 13px; padding-bottom: 3px; color: #222; }
.quick { width: 76px; height: 12px; margin-right: 5px; }
.ptitle span { flex: 1; }
.pwin { width: 68px; height: 10px; margin-right: 11px; }
.ptabs { display: flex; height: 15px; }
.ptabs button { width: 38px; color: #555; }
.ptabs .file { background: #1a70cb; color: #fff; }
.ptabs .home { background: #f6f6f9; }
.help { width: 24px; height: 12px; margin: 1px 2px 0 auto; }
.ribbon { display: flex; height: 60px; background: #f6f5f9; border-top: 1px solid #e3e3e8; border-bottom: 1px solid #dedee4; }
.group { display: flex; flex-direction: column; align-items: center; border-right: 1px solid #e2e2e8; padding-top: 2px; color: #555; }
.group > span { height: 9px; }
.tools { display: flex; width: 100%; height: 46px; justify-content: center; }
.big { flex-direction: column; justify-content: flex-start; color: #333; text-align: center; width: 34px; }
.big svg { width: 22px; height: 22px; margin: 1px 0 2px; }
.big b { height: 8px; font-size: 7px; line-height: 8px; }
.stack { display: flex; flex-direction: column; gap: 4px; padding-top: 2px; color: #444; }
.stack button { height: 10px; gap: 2px; justify-content: flex-start; }
.stack svg { width: 10px; height: 10px; }
.dim { color: #999; }
.clip { width: 70px; } .image { width: 79px; } .toolset { width: 53px; } .brushes { width: 36px; } .shapes { width: 161px; } .size { width: 35px; } .colors { width: 233px; } .three { width: 40px; }
.three .big { width: 38px; }
.toolset svg { width: 44px; height: 36px; margin-top: 6px; }
.gallery { display: grid; grid-template-columns: repeat(7, 13px); grid-auto-rows: 13px; width: 93px; height: 41px; padding: 1px; border: 1px solid #dfe5ee; background: #f9fcff; }
.gallery svg { width: 13px; height: 13px; padding: 1px; fill: none; stroke: #456f96; }
.gallery .picked { background: #c8def7; }
.arrows { display: grid; width: 10px; height: 41px; border: 1px solid #dfe5ee; margin-right: 4px; }
.arrows i { font-style: normal; font-size: 6px; line-height: 12px; text-align: center; }
.colors .tools { justify-content: flex-start; padding-left: 2px; }
.colors .big { width: 28px; }
.colors .active { background: #c8def6; box-shadow: inset 0 0 0 1px #8fbce8; }
.palette { display: grid; grid-template-columns: repeat(10, 1fr); grid-auto-rows: 14px; width: 144px; margin-left: 1px; }
.palette button { padding: 0 1px 1px 0; }
.palette i { width: 13px; height: 13px; border: 1px solid #bbb; box-shadow: inset 0 0 0 1px #fff; }
.work { flex: 1; min-height: 0; display: flex; border-left: 3px solid #e6ebf5; }
.drawing { flex: 1; min-width: 0; height: 100%; margin-left: -3px; font-family: "Liberation Sans", Arial, sans-serif; }
.red, .blue, .sky, .green { fill: none; stroke-width: 2; stroke-linejoin: round; stroke-linecap: round; }
.red { stroke: #f42a1c; } .blue { stroke: #1c1ed0; } .sky { stroke: #1b97da; } .green { stroke: #249a52; }
.pill { fill: #94cde9; }
.tr { fill: #dd2d26; } .tb { fill: #2020cc; } .tn { fill: #2322a8; } .ts { fill: #2199d8; } .tg { fill: #249a50; }
.vscroll { display: flex; flex-direction: column; align-items: center; width: 10px; background: #f0f0f2; padding: 3px 0 0; }
.vscroll svg { width: 7px; height: 7px; }
.vscroll i { width: 9px; flex: 1; background: #cbcace; margin: 97px 0 2px; }
.edgeline { height: 5px; background: linear-gradient(#fff 1px, #b7c7da 2px, #c6d2e0 4px, #f0f0f2 5px); }
.edgeline i { display: block; width: 4px; height: 4px; margin: 0 auto; border: 1px solid #555; background: #fff; transform: translateX(39px); }
.hscroll { display: flex; height: 13px; align-items: center; background: #f0f0f2; }
.hscroll svg { width: 10px; height: 10px; margin-left: 1px; fill: none; stroke: #333; stroke-width: 2; }
.hscroll i { flex: 1; height: 11px; background: #cdccd0; margin-right: 79px; }
.hscroll svg:last-child { margin-right: 12px; }
.pstatus { display: flex; height: 15px; background: #f2f0f3; align-items: stretch; }
.pstatus span { display: flex; align-items: center; gap: 4px; padding-left: 2px; border-right: 1px solid #ddd; }
.pstatus svg { width: 10px; height: 10px; }
.c1, .c2 { width: 102px; }
.c3 { flex: 1; }
.zoomer { display: flex; align-items: center; gap: 6px; margin-left: 12px; padding-right: 3px; }
.zoomer input { appearance: none; width: 57px; height: 11px; background: linear-gradient(transparent 4px, #dcdcdf 4px, #dcdcdf 6px, transparent 6px); }
.zoomer input::-webkit-slider-thumb { appearance: none; width: 7px; height: 11px; background: #0e70d0; clip-path: polygon(0 0, 100% 0, 100% 80%, 50% 100%, 0 80%); }
.innerbar { display: flex; height: 27px; background: #2a3547; color: #fff; }
.innerbar button { width: 32px; }
.innerbar .run { box-shadow: inset 0 -2px #6fa8dc; }
.innerbar .front { background: #56606f; }
.itray { display: flex; align-items: center; gap: 4px; margin-left: auto; padding-right: 15px; font-size: 7px; }
.itray svg { width: 12px; height: 12px; }
.itray time { text-align: center; line-height: 12px; margin: 0 8px 0 5px; }
.itray span { margin-left: 2px; }
.bezel { height: 11px; background: #191919; }

.chat { width: 314px; display: flex; flex-direction: column; background: #fff; font-size: 10px; color: #6a6d7d; }
.log { flex: 1; }
.notice { display: flex; align-items: center; justify-content: center; gap: 3px; height: 22px; background: #f6f6fb; border-bottom: 1px solid #e9e9f0; font-size: 10px; }
.notice svg { width: 14px; height: 14px; }
.to { display: flex; align-items: center; height: 22px; margin: 10px 18px 0 16px; color: #444; }
.who { height: 20px; gap: 3px; margin: 0 6px 0 8px; padding: 0 6px; border-radius: 5px; background: #f1f0f6; color: #23232f; }
.who svg { width: 8px; height: 8px; }
.to em { font-style: normal; color: #e9706d; }
.ops { width: 54px; height: 14px; margin-left: auto; }
textarea { height: 73px; margin: 6px 16px 0; resize: none; font-size: 11px; line-height: 16px; }
textarea::placeholder { color: #777b8b; opacity: 1; }

.bar { display: flex; align-items: stretch; }
.find { display: flex; align-items: center; background: #fff; border: 1px solid #c8ccce; border-bottom: 0; color: #111; }
.find input { flex: 1; min-width: 0; }
.find input::placeholder { color: #333; opacity: 1; }
.apps { display: flex; }
.tray { display: flex; align-items: center; margin-left: auto; text-align: center; }
.notif { position: relative; }
.notif b { position: absolute; font-weight: 400; border-radius: 50%; background: #c8cdd0; border: 1px solid #888; }
.shared { height: 33px; background: #ececec; }
.shared .start { width: 44px; }
.shared .start svg { width: 16px; height: 16px; }
.shared .find { width: 312px; padding-left: 9px; gap: 9px; font-size: 13px; }
.shared .find svg { width: 17px; height: 17px; }
.shared .apps { display: grid; grid-template-columns: repeat(12, 1fr); width: 534px; }
.shared .apps button { padding-top: 2px; }
.shared .zoom { background: #fafafa; }
.shared .pink { background: #ffb273; }
.shared .tray { gap: 6px; padding: 2px 16px 0 0; font-size: 10px; line-height: 16px; }
.shared .tray > svg { width: 16px; height: 16px; }
.shared .tray span { margin-left: 2px; }
.shared time { margin: 0 10px 0 6px; }
.shared .notif svg { width: 17px; height: 16px; }
.shared .notif b { width: 15px; height: 15px; left: 7px; top: 6px; line-height: 13px; }

.controls { height: 52px; background: #f0f0f0; }
.seek { display: flex; height: 19px; align-items: center; padding: 0 6px 0 18px; }
.seek time { width: 46px; line-height: 19px; }
.seek time:last-child { width: 54px; text-align: right; }
.seek input { appearance: none; flex: 1; min-width: 0; height: 9px; border-radius: 4px; background: linear-gradient(90deg, #2a80d2 var(--p), transparent var(--p)), linear-gradient(#bdbdbd, #dedede); }
.seek input::-webkit-slider-thumb { appearance: none; width: 1px; height: 1px; }
.buttons { display: flex; align-items: center; gap: 14px; height: 32px; padding: 0 4px; }
.buttons button { width: 24px; height: 24px; background: #e2e2e2; border: 1px solid #aaa; }
.buttons button svg { width: 18px; height: 18px; }
.buttons .playbtn { width: 30px; height: 30px; }
.buttons .playbtn svg { width: 24px; height: 24px; }
.set { display: flex; gap: 2px; }
.loud { width: 15px; height: 15px; margin: 16px -9px 0 auto; }
.volume { position: relative; width: 76px; height: 26px; margin-top: 4px; }
.volume svg { width: 76px; height: 26px; }
.volume span { position: absolute; left: 4px; top: 1px; font-size: 10px; line-height: 14px; color: #777; }
.volume input { position: absolute; inset: 0; width: 100%; opacity: 0; }

.host { height: 39px; background: #d6e4eb; }
.host .start { width: 48px; }
.host .start svg { width: 18px; height: 18px; }
.host .find { width: 344px; padding-left: 10px; gap: 11px; font-size: 14px; }
.host .find svg { width: 18px; height: 18px; }
.host .apps button { width: 49px; position: relative; }
.host .run::after { content: ""; position: absolute; bottom: 0; left: 5px; right: 4px; height: 2px; background: #0a78d4; }
.host .front { background: #eef3f6; }
.host .front::after { left: 0; right: 0; }
.host .tray { font-size: 11px; line-height: 17px; gap: 10px; }
.host .tray > svg { width: 15px; height: 15px; }
.host .tray time { margin: 0 7px 0 3px; }
.host .notif svg { width: 18px; height: 17px; }
.host .notif b { width: 17px; height: 17px; left: 8px; top: 6px; line-height: 15px; }
.host .notif { margin-right: 9px; }
.peek { width: 4px; height: 39px; border-left: 1px solid #a5b4bc; }
</style>
